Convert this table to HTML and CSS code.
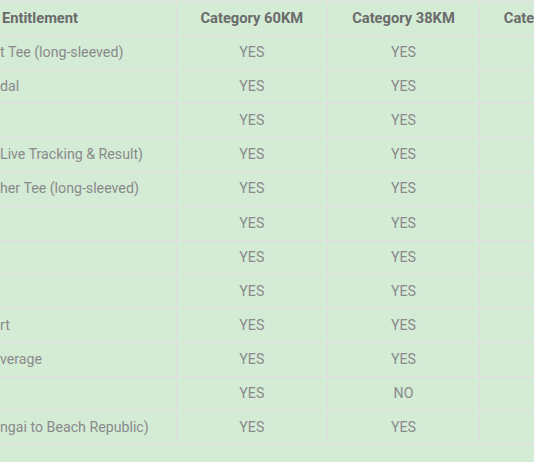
FILE: index.html
```html
<!DOCTYPE html>
<html>
<head>
<meta charset="utf-8">
<link rel="stylesheet" href="styles.css">
</head>
<body>
<div class="wrap">
<table class="ent">
<colgroup>
<col class="c-first"><col class="c-cat"><col class="c-cat"><col class="c-cat">
</colgroup>
<thead>
<tr><th class="first head-first">Entitlement</th><th>Category 60KM</th><th>Category 38KM</th><th>Category 21KM</th></tr>
</thead>
<tbody>
<tr><td class="first">t Tee (long-sleeved)</td><td>YES</td><td>YES</td><td>YES</td></tr>
<tr><td class="first">dal</td><td>YES</td><td>YES</td><td>YES</td></tr>
<tr><td class="first"></td><td>YES</td><td>YES</td><td>YES</td></tr>
<tr><td class="first">Live Tracking &amp; Result)</td><td>YES</td><td>YES</td><td>YES</td></tr>
<tr><td class="first">her Tee (long-sleeved)</td><td>YES</td><td>YES</td><td>YES</td></tr>
<tr><td class="first"></td><td>YES</td><td>YES</td><td>YES</td></tr>
<tr><td class="first"></td><td>YES</td><td>YES</td><td>YES</td></tr>
<tr><td class="first"></td><td>YES</td><td>YES</td><td>YES</td></tr>
<tr><td class="first">rt</td><td>YES</td><td>YES</td><td>YES</td></tr>
<tr><td class="first">verage</td><td>YES</td><td>YES</td><td>YES</td></tr>
<tr><td class="first"></td><td>YES</td><td>NO</td><td>NO</td></tr>
<tr><td class="first">ngai to Beach Republic)</td><td>YES</td><td>YES</td><td>YES</td></tr>
</tbody>
</table>
</div>
</body>
</html>
```
FILE: styles.css
```css
html, body {
  margin: 0;
  padding: 0;
  background: #d4ebd6;
  overflow: hidden;
}
.wrap {
  padding-top: 1px;
  width: 700px;
}
.ent {
  border-collapse: collapse;
  table-layout: fixed;
  width: 631px;
  font-family: Roboto, "Liberation Sans", sans-serif;
  line-height: 21.1px;
}
.c-first { width: 176px; }
.c-cat { width: 151.67px; }
.ent th, .ent td {
  border: 1px solid #e0dcdf;
  padding: 6px 0;
  text-align: center;
  white-space: nowrap;
  overflow: hidden;
}
.ent th {
  font-size: 14.7px;
  font-weight: 700;
  color: #6b6b6b;
}
.ent td {
  font-size: 14.2px;
  font-weight: 400;
  color: #8a8a8a;
}
.ent .first {
  text-align: left;
  border-left: none;
  padding-left: 0;
}
.ent .head-first {
  padding-left: 2px;
}
```
